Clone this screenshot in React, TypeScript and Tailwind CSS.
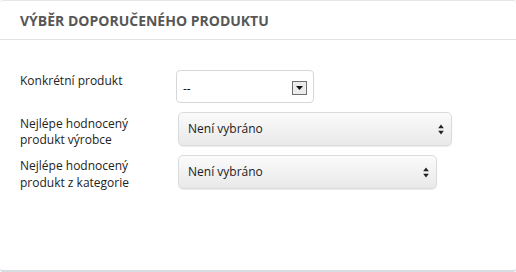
const font = { fontFamily: '"Open Sans", "Liberation Sans", sans-serif' };

function UpDown() {
  return (
    <svg width="6" height="11" viewBox="0 0 6 11" className="shrink-0">
      <path d="M3 0.5 L5.8 4.3 L0.2 4.3 Z" fill="#222" />
      <path d="M3 10.5 L5.8 6.7 L0.2 6.7 Z" fill="#222" />
    </svg>
  );
}

function MacSelect({ width }: { width: string }) {
  return (
    <div
      className={`${width} h-[34px] flex items-center justify-between pl-[9px] pr-[7px] rounded-[5px] border border-[#d9dcdf] bg-gradient-to-b from-[#fbfbfb] to-[#e9e9e9] shadow-[0_1px_1px_rgba(0,0,0,0.08)] text-[12px] text-[#1b1b1b]`}
    >
      <span>Není vybráno</span>
      <UpDown />
    </div>
  );
}

export default function App() {
  return (
    <div className="w-[516px] h-[272px] bg-white overflow-hidden" style={font}>
      <div className="h-[272px] flex flex-col border-t border-[#e4e7ea] border-b-2 border-b-[#d6dde1] rounded-[3px]">
        {/* Header */}
        <div className="h-[39px] shrink-0 flex items-center px-[20px] border-b border-[#e0e3e6]">
          <h2 className="text-[14px] font-bold uppercase text-[#575757]">
            Výběr doporučeného produktu
          </h2>
        </div>

        {/* Form */}
        <div className="px-[20px] pt-[30px] flex flex-col">
          <div className="flex items-start">
            <label className="w-[156px] pt-[3px] text-[12px] leading-[16px] text-[#222]">
              Konkrétní produkt
            </label>
            <div className="w-[138px] h-[33px] flex items-center justify-between pl-[6px] pr-[6px] pt-[4px] rounded-[4px] border border-[#d5d8db] bg-white text-[12px] text-[#111]">
              <span>--</span>
              <span className="w-[15px] h-[14px] -mt-[2px] flex items-center justify-center border border-[#6f6f6f] bg-[#ececec]">
                <svg width="7" height="4" viewBox="0 0 7 4">
                  <path d="M0 0 L7 0 L3.5 4 Z" fill="#111" />
                </svg>
              </span>
            </div>
          </div>

          <div className="flex items-start mt-[9px]">
            <label className="w-[158px] pt-[4px] text-[12px] leading-[16px] text-[#222] pr-[30px]">
              Nejlépe hodnocený produkt výrobce
            </label>
            <MacSelect width="w-[274px]" />
          </div>

          <div className="flex items-start mt-[7px]">
            <label className="w-[158px] pt-[2px] text-[12px] leading-[17px] text-[#222] pr-[30px]">
              Nejlépe hodnocený produkt z kategorie
            </label>
            <MacSelect width="w-[259px]" />
          </div>
        </div>
      </div>
    </div>
  );
}
